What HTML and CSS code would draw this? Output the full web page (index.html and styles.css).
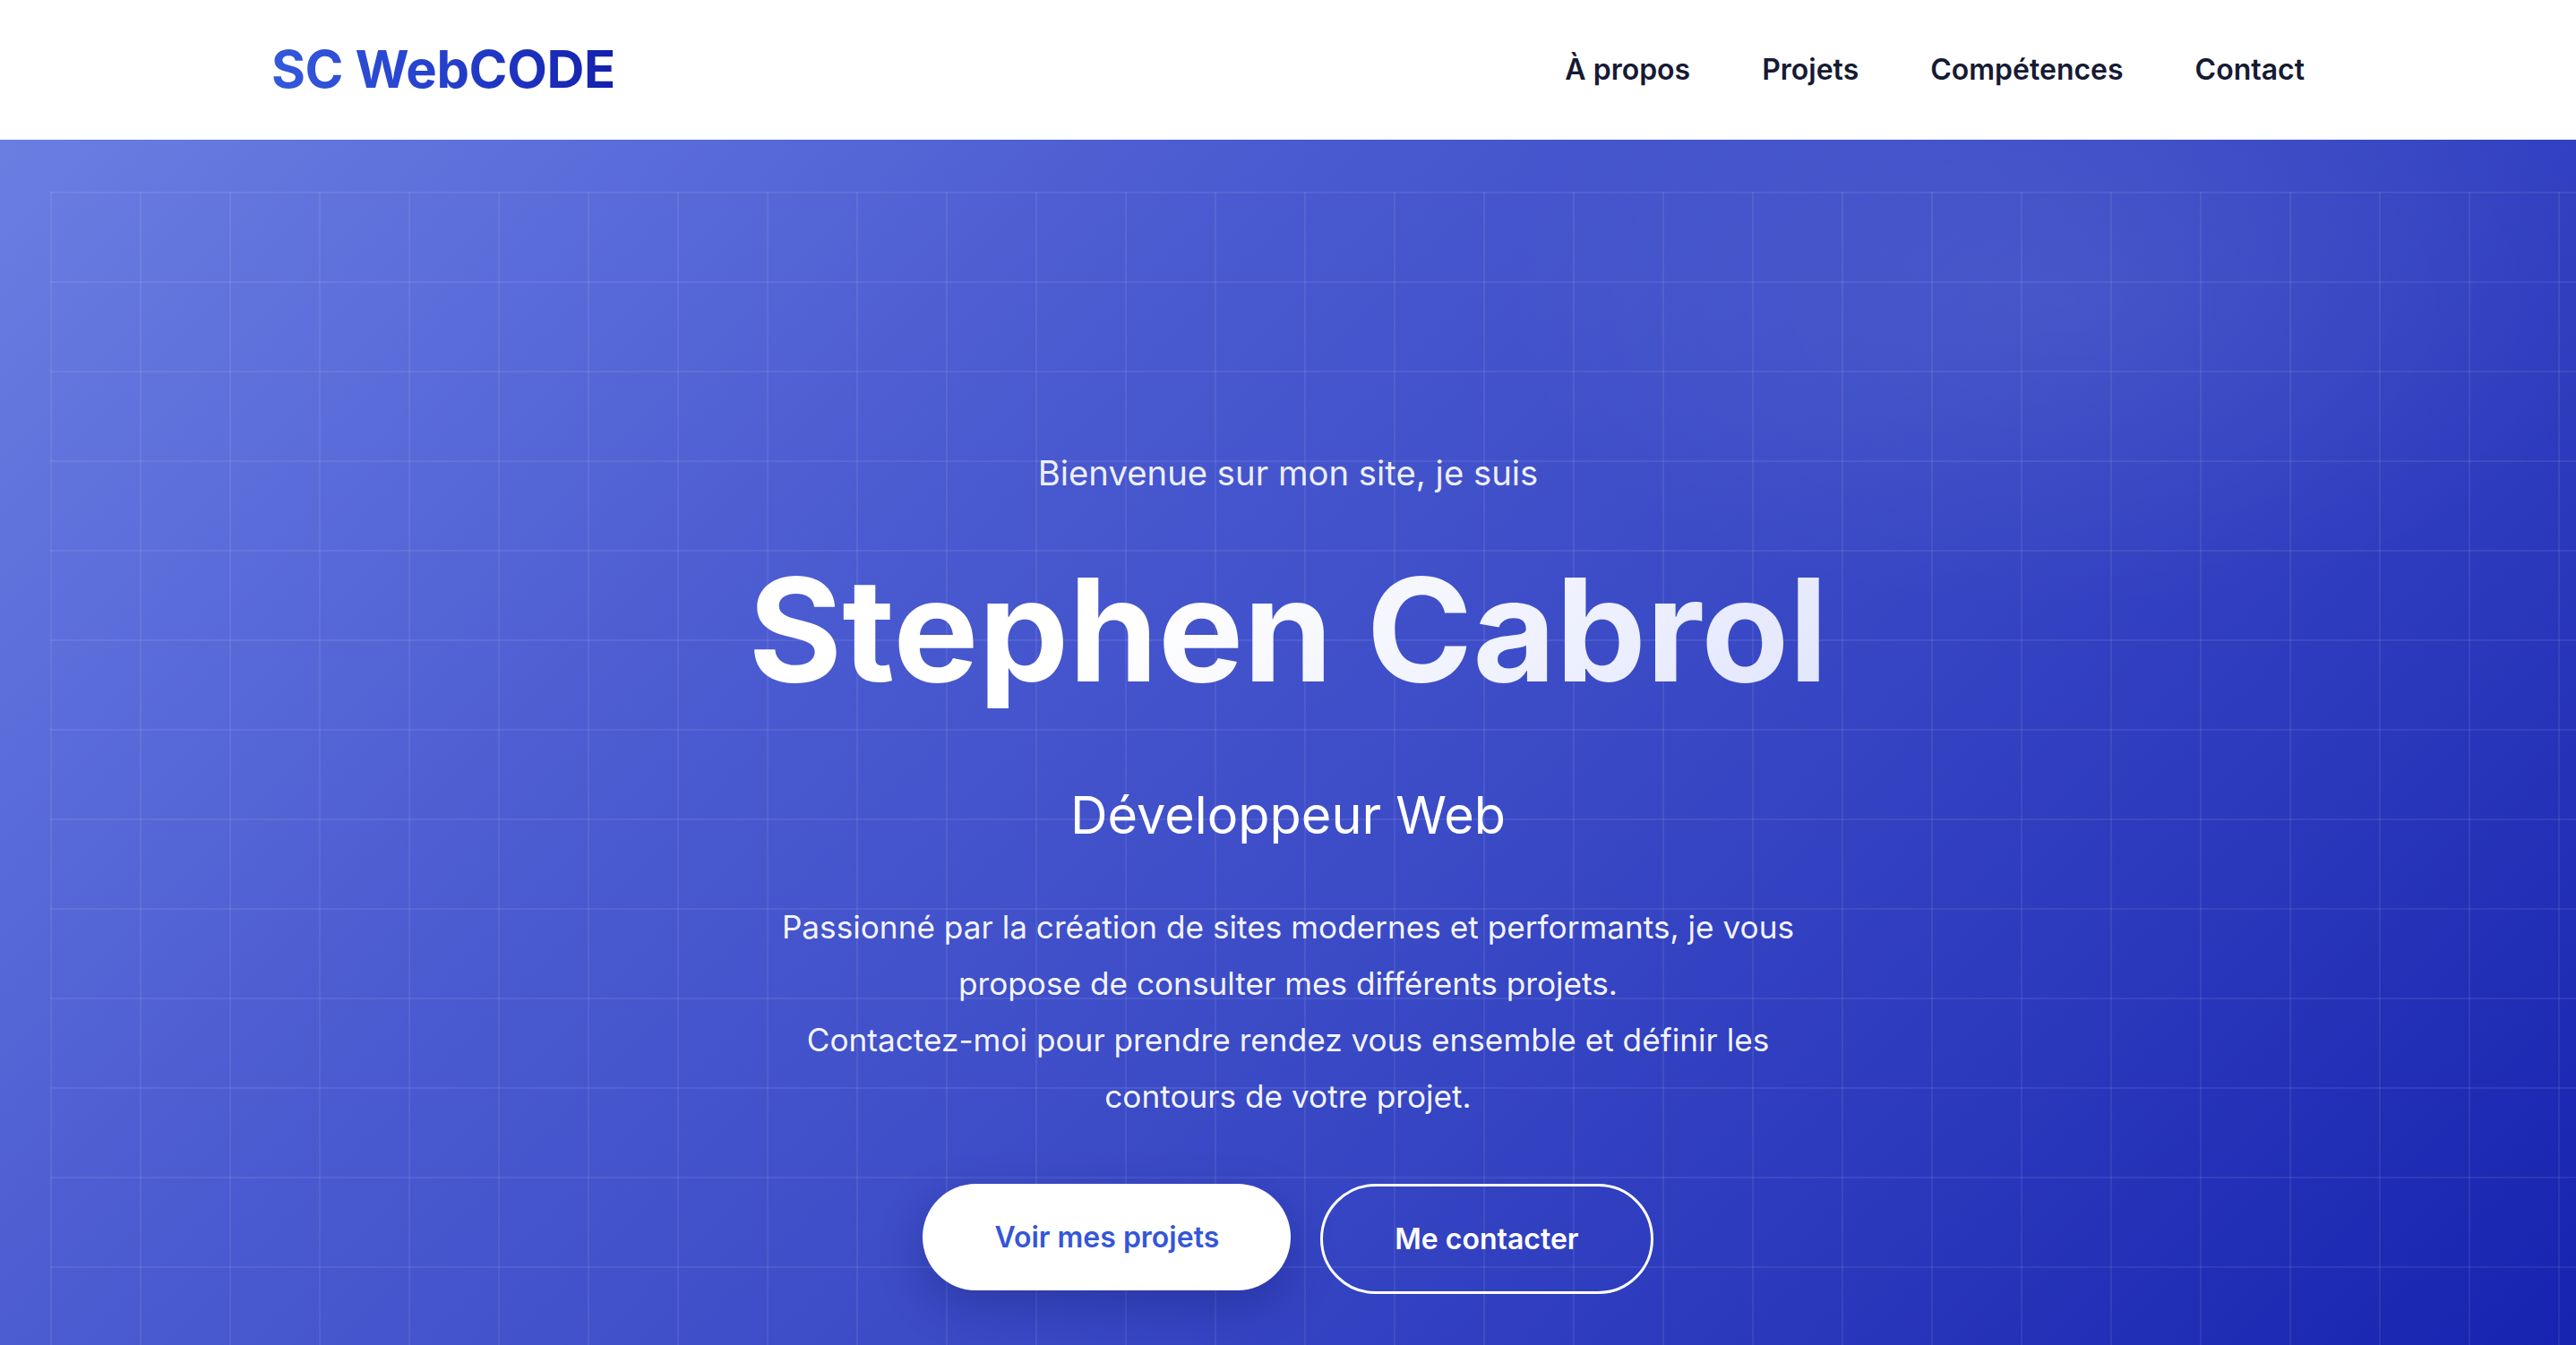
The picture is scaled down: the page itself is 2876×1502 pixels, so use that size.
FILE: index.html
```html
<!DOCTYPE html>
<html lang="fr">
<head>
<meta charset="utf-8">
<title>SC WebCODE — Stephen Cabrol</title>
<link rel="stylesheet" href="styles.css">
</head>
<body>
<header class="site-header">
  <div class="container header-inner">
    <a class="logo" href="#">SC WebCODE</a>
    <nav class="main-nav">
      <a href="#about">À propos</a>
      <a href="#projects">Projets</a>
      <a href="#skills">Compétences</a>
      <a href="#contact">Contact</a>
    </nav>
  </div>
</header>
<main>
  <section class="hero">
    <div class="hero-grid"></div>
    <div class="hero-content">
      <p class="greeting">Bienvenue sur mon site, je suis</p>
      <h1 class="title">Stephen Cabrol</h1>
      <h2 class="role">Développeur Web</h2>
      <p class="intro">Passionné par la création de sites modernes et performants, je vous propose de consulter mes différents projets.<br>Contactez-moi pour prendre rendez vous ensemble et définir les contours de votre projet.</p>
      <div class="actions">
        <a class="btn btn-primary" href="#projects">Voir mes projets</a>
        <a class="btn btn-outline" href="#contact">Me contacter</a>
      </div>
    </div>
  </section>
</main>
</body>
</html>
```

FILE: styles.css
```css
* {
  box-sizing: border-box;
}

html, body {
  margin: 0;
  padding: 0;
}

body {
  font-family: Inter, "Noto Sans", "Liberation Sans", sans-serif;
  color: #1a1b2e;
  background: #1320ad;
  overflow: hidden;
}

a {
  text-decoration: none;
}

.container {
  width: 2270px;
  margin: 0 auto;
}

/* Header */
.site-header {
  height: 156px;
  background: #ffffff;
  position: relative;
  z-index: 2;
}

.header-inner {
  height: 100%;
  display: flex;
  align-items: center;
  justify-content: space-between;
}

.logo {
  font-size: 58px;
  font-weight: 700;
  letter-spacing: -0.4px;
  background: linear-gradient(90deg, #3459dc 0%, #2540cc 50%, #1320ad 100%);
  -webkit-background-clip: text;
  background-clip: text;
  color: transparent;
  line-height: 1.2;
}

.main-nav {
  display: flex;
  gap: 80px;
}

.main-nav a {
  font-size: 32px;
  font-weight: 600;
  color: #161a33;
  line-height: 1.2;
}

/* Hero */
.hero {
  position: relative;
  min-height: 1400px;
  padding: 342px 0 200px;
  background:
    radial-gradient(ellipse 900px 500px at 80% 12%, rgba(255, 255, 255, 0.07), rgba(255, 255, 255, 0) 70%),
    linear-gradient(135deg, #6a7ee2 0%, #4a5ad0 33%, #3b4bc6 55%, #2a38bc 76%, #1320ad 100%);
  overflow: hidden;
}

.hero-grid {
  position: absolute;
  top: 58px;
  left: 56px;
  right: 0;
  bottom: 0;
  background-image:
    linear-gradient(rgba(255, 255, 255, 0.07) 2px, transparent 2px),
    linear-gradient(90deg, rgba(255, 255, 255, 0.07) 2px, transparent 2px);
  background-size: 100px 100px;
  pointer-events: none;
}

.hero-content {
  position: relative;
  display: flex;
  flex-direction: column;
  align-items: center;
  text-align: center;
  color: #ffffff;
}

.greeting {
  margin: 0;
  font-size: 38.3px;
  line-height: 60px;
  font-weight: 400;
  color: rgba(255, 255, 255, 0.92);
}

.title {
  margin: 57px 0 0;
  font-size: 160px;
  line-height: 176px;
  font-weight: 700;
  letter-spacing: 0;
  background: linear-gradient(135deg, #ffffff 0%, #ffffff 35%, #e2e6fd 100%);
  -webkit-background-clip: text;
  background-clip: text;
  color: transparent;
}

.role {
  margin: 79px 0 0;
  font-size: 57.6px;
  line-height: 80px;
  font-weight: 400;
  color: #ffffff;
}

.intro {
  margin: 54px 0 0;
  max-width: 1170px;
  font-size: 35.2px;
  line-height: 63px;
  font-weight: 400;
  color: rgba(255, 255, 255, 0.96);
}

.actions {
  margin-top: 66px;
  display: flex;
  align-items: flex-start;
  gap: 33px;
}

.btn {
  display: inline-flex;
  align-items: center;
  justify-content: center;
  padding: 0 80px;
  border-radius: 90px;
  font-size: 32px;
  font-weight: 600;
  line-height: 39px;
}

.btn-primary {
  height: 119px;
  background: #ffffff;
  color: #3556d8;
  box-shadow: 0 18px 50px rgba(10, 16, 90, 0.28);
}

.btn-outline {
  height: 123px;
  border: 3.6px solid #ffffff;
  background: transparent;
  color: #ffffff;
}
```
